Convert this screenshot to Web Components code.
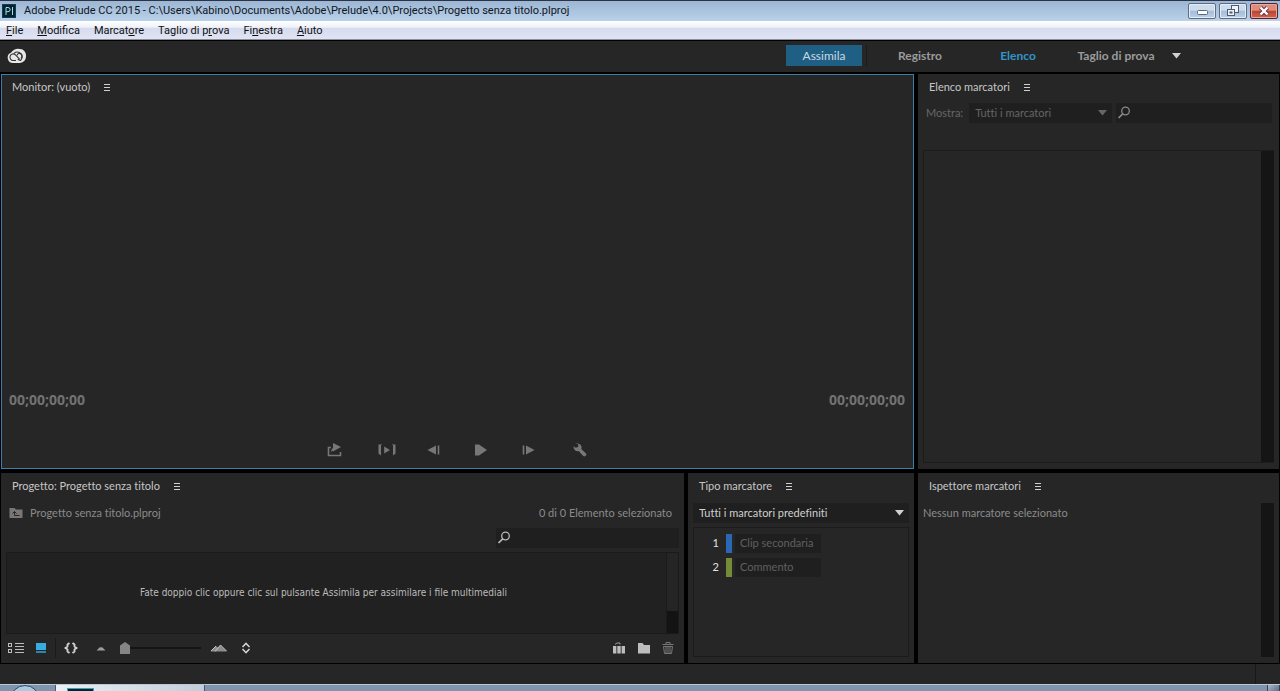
<!DOCTYPE html>
<html lang="it">
<head>
<meta charset="utf-8">
<title>Adobe Prelude CC 2015</title>
<style>
  html { background: #000; }
  body { margin: 0; min-height: 100vh; display: flex; flex-direction: column; font-variant-ligatures: none; }
  prelude-app { flex: 1; }
</style>
</head>
<body>
<prelude-app></prelude-app>
<script>
const ICONS = {
  prelude: [14, 14, '<rect x=".5" y=".5" width="13" height="13" fill="#04222f" stroke="#0d3f52"/><g stroke="#9fe3ea" fill="none"><path d="M4 11V3.500H6a1.800 1.800 0 0 1 0 4.200H4"/><path d="M10.500 3v8"/></g>'],
  minimize: [12, 12, '<rect x="1.500" y="5.500" width="10" height="4" rx="1" fill="#fff" stroke="#5b6880"/>'],
  restore: [12, 12, '<g fill="#eef3f9" stroke="#4d5a70"><rect x="4.500" y=".5" width="7" height="7"/><rect x=".5" y="4.500" width="7" height="6"/><rect x="3" y="7" width="2" height="1"/></g>'],
  close: [12, 12, '<path d="M2.500 2.500l7 7M9.500 2.500l-7 7" stroke="#6c3840" stroke-width="4.400"/><path d="M2.500 2.500l7 7M9.500 2.500l-7 7" stroke="#fff" stroke-width="2.400"/>'],
  cloud: [20, 16, '<path d="M6 15A5.300 5.300 0 0 1 4 4.800 7.500 6.500 0 0 1 13 1a6.300 6.300 0 0 1 6 7 6.500 6.500 0 0 1-6 7z" fill="#e8e8e8"/><g fill="none" stroke="#333" stroke-width="1.100"><path d="M9 12.500H6.300a3.300 3.300 0 1 1 2.200-5.700l4.300 4.500"/><path d="M7 5.300a4.600 4.600 0 1 1 6.500 7.200c-1.200 0-2-.5-2.800-1.300"/><path d="M10 7.300a2.600 2.600 0 1 1 3.800 3"/></g>'],
  menu: [8, 8, '<path d="M1 1.500h6M1 4.500h6M1 7.500h6" stroke="#cfcfcf" stroke-width="1"/>'],
  caret: [10, 6, '<path d="M0 0h9L4.500 5.500z" fill="currentColor"/>'],
  search: [14, 14, '<circle cx="8.500" cy="5" r="3.800" fill="none" stroke="currentColor" stroke-width="1.300"/><path d="M5.700 7.800L1.500 12" stroke="currentColor" stroke-width="1.700"/>'],
  export: [16, 14, '<path d="M4 4.500H1.500v8h12V9" fill="none" stroke="#777" stroke-width="1.600"/><path d="M6 0v8.500l8-4.500z" fill="#777"/><path d="M4 9.500c.3-3 1.200-4.500 3-5v3c-1.500 0-2.300.7-3 2z" fill="#777"/>'],
  inout: [18, 14, '<path d="M.5 1.500H3v11L.5 10.500zM17.500 1.500h-2.500v11l2.500-2z" fill="#777"/><path d="M3 1.500h1M14 1.500h1" stroke="#555"/><path d="M6.200 3.500v7L12 7z" fill="#777"/>'],
  back: [14, 12, '<path d="M9 1.500v9L.5 6z" fill="#777"/><path d="M11.500 1.500v9" stroke="#777" stroke-width="1.600"/>'],
  play: [14, 12, '<path d="M1 .5h4L13 6 5 11.500H1z" fill="#777"/>'],
  forward: [14, 12, '<path d="M5 1.500v9l8.500-4.500z" fill="#777"/><path d="M2.500 1.500v9" stroke="#777" stroke-width="1.600"/>'],
  wrench: [14, 14, '<path d="M2 1l3 0 .3 3L2 4.500.8 3A4 4 0 0 0 5.600 8l4.600 5 1.300.5L13.500 12 13 10.500 8.300 6A4 4 0 0 0 4 .6z" fill="#777"/><path d="M1 1l2.800 3" stroke="#262626" stroke-width="2"/>'],
  folderup: [14, 12, '<path d="M.5 1h5L7 2.500h6.500v8.500H.5z" fill="#777"/><path d="M10.500 8.500H5.500V4.500M3.500 6.500l2-2 2 2" fill="none" stroke="#262626"/>'],
  list: [16, 12, '<g fill="none" stroke="#bdbdbd"><rect x=".5" y="1.500" width="3" height="3"/><rect x=".5" y="7.500" width="3" height="3"/><path d="M7 1.500h9M7 4.500h9M7 7.500h9M7 10.500h9"/></g>'],
  thumbs: [12, 12, '<rect x="1" y="1" width="10" height="7" fill="#37ade0"/><path d="M1 10h10" stroke="#2b86ae" stroke-width="2"/>'],
  braces: [14, 12, '<g fill="none" stroke="#d0d0d0" stroke-width="1.800"><path d="M5.500 1L3.500 2.500v2L1.500 6l2 1.500v2l2 1.500M8.500 1l2 1.500v2l2 1.500-2 1.500v2l-2 1.500"/></g>'],
  hill: [10, 6, '<path d="M.5 5.500L4 2l1 .8L6 2l3.500 3.500z" fill="#9c9c9c"/>'],
  hills: [18, 8, '<path d="M.5 7.500L6 2l2 1.600L10.500 1l6.500 6.500z" fill="#8c8c8c"/><path d="M1 7l5-5M5 7.500L10.500 1l6 6" stroke="#c0c0c0" fill="none"/>'],
  sort: [10, 12, '<path d="M1.500 5L5 1.500 8.500 5M1.500 7L5 10.500 8.500 7" fill="none" stroke="#d0d0d0" stroke-width="1.600"/>'],
  automate: [14, 12, '<path d="M1 4h3.400v7.500H1zM5.300 4h3.400v7.500H5.300zM9.600 4h3.400v7.500H9.600z" fill="#bdbdbd"/><path d="M3 2.500l2-1.500h3v1.500" fill="none" stroke="#999"/>'],
  folder: [14, 12, '<path d="M1 1h4.500L7 3h6v8.500H1z" fill="#bdbdbd"/>'],
  trash: [12, 12, '<g fill="none" stroke="#777"><path d="M4 2V.5h4V2M.5 2.500h11"/><path d="M1.500 4.500h9l-1 7h-7zM4 4.500v7M6 4.500v7M8 4.500v7"/></g>']
};

function define(name, html, setup) {
  const template = document.createElement('template');
  template.innerHTML = html;
  customElements.define(name, class extends HTMLElement {
    constructor() {
      super();
      this.attachShadow({ mode: 'open' }).append(template.content.cloneNode(true));
    }
    connectedCallback() { if (setup) setup(this, this.shadowRoot); }
  });
}

define('ui-icon', '<style>:host{display:inline-flex;flex:none}svg{display:block}</style><span></span>', (el, root) => {
  const [w, h, body] = ICONS[el.getAttribute('name')];
  root.querySelector('span').innerHTML = `<svg width="${w}" height="${h}" viewBox="0 0 ${w} ${h}" aria-hidden="true">${body}</svg>`;
});

define('title-bar', `
<style>
  :host { display: flex; align-items: center; height: 20px; border-top: 1px solid #2b3446; padding: 0 2px;
    background: linear-gradient(#9cb6d3, #b9d1ea); color: #10151d; font: 11px/18px Roboto, sans-serif; }
  h1 { flex: 1; margin: 0 0 0 8px; font: inherit; white-space: nowrap; overflow: hidden; }
  .buttons { display: flex; gap: 3px; }
  button { box-sizing: border-box; width: 28px; height: 16px; padding: 0; border: 1px solid #5d6c84; border-radius: 2px;
    display: flex; align-items: center; justify-content: center; box-shadow: inset 0 0 0 1px #e3edf7;
    background: linear-gradient(#cddced 45%, #a6bdd7 50%, #bcd0e6); }
  .close { border-color: #5b2026; box-shadow: inset 0 0 0 1px #e6a79c; background: linear-gradient(#dd8d7d 45%, #be4230 50%, #cf6350); }
</style>
<ui-icon name="prelude"></ui-icon>
<h1>Adobe Prelude CC 2015 - C:\\Users\\Kabino\\Documents\\Adobe\\Prelude\\4.0\\Projects\\Progetto senza titolo.plproj</h1>
<div class="buttons">
  <button aria-label="Riduci a icona"><ui-icon name="minimize"></ui-icon></button>
  <button aria-label="Ripristina"><ui-icon name="restore"></ui-icon></button>
  <button class="close" aria-label="Chiudi"><ui-icon name="close"></ui-icon></button>
</div>`);

define('menu-bar', `
<style>
  :host { display: block; border-bottom: 1px solid #8c8f98; background: linear-gradient(#fff, #eef1f8 35%, #d5dbee 40%, #e0e4f4); }
  nav { display: flex; gap: 14px; padding: 0 6px; height: 18px; }
  button { border: 0; padding: 0; background: none; color: #111; font: 11px/20px Roboto, sans-serif; }
  u { text-underline-offset: 1px; }
</style>
<nav aria-label="Menu principale">
  <button><u>F</u>ile</button><button><u>M</u>odifica</button><button>Marcat<u>o</u>re</button>
  <button>Taglio di p<u>r</u>ova</button><button>Fi<u>n</u>estra</button><button><u>A</u>iuto</button>
</nav>`);

define('workspace-bar', `
<style>
  :host { box-sizing: border-box; display: flex; align-items: center; justify-content: space-between; height: 32px; padding: 0 91px 2px 7px;
    border-top: 1px solid #000; background: #262626; }
  button { border: 0; background: none; padding: 0; color: #9b9b9b; font: bold 12px/20px Lato, sans-serif; }
  nav { display: flex; align-items: center; }
  .cloud { display: flex; }
  .tab { width: 98px; }
  .active { width: 76px; height: 21px; background: #1f5f83; color: #c9dae4; font-weight: normal; }
  .rule { width: 1px; height: 21px; margin: 0 4px; background: #1b1b1b; }
  .current { color: #3295c8; }
  .more { width: 24px; height: 20px; color: #d0d0d0; display: flex; align-items: center; justify-content: center; }
</style>
<button class="cloud" aria-label="Creative Cloud"><ui-icon name="cloud"></ui-icon></button>
<nav aria-label="Aree di lavoro">
  <button class="active">Assimila</button><span class="rule"></span>
  <button class="tab">Registro</button><button class="tab current">Elenco</button><button class="tab">Taglio di prova</button>
  <button class="more" aria-label="Altre aree di lavoro"><ui-icon name="caret"></ui-icon></button>
</nav>`);

define('ui-panel', `
<style>
  :host { box-sizing: border-box; display: flex; flex-direction: column; min-width: 0; min-height: 0;
    border: 1px solid #262626; background: #262626; color: #8b8b8b; font: 11px/20px Lato, sans-serif; font-variant-ligatures: none; }
  :host([focused]) { border-color: #3c7ea8; }
  header { box-sizing: border-box; display: flex; align-items: center; gap: 13px; height: 25px; padding: 0 10px 1px; }
  h2 { margin: 0; color: #c6c6c6; font: inherit; font-variant-ligatures: none; }
  button { display: flex; border: 0; padding: 0; background: none; }
</style>
<header><h2></h2><button aria-label="Menu del pannello"><ui-icon name="menu"></ui-icon></button></header>
<slot></slot>`, (el, root) => {
  root.querySelector('h2').textContent = el.getAttribute('heading');
});

define('search-box', `
<style>
  :host { display: flex; align-items: center; height: 20px; min-width: 0; background: #1f1f1f; }
  ui-icon { padding: 0 1px; }
  input { flex: 1; min-width: 0; height: 20px; box-sizing: border-box; border: 0; padding: 0 4px; background: none; color: #ccc; font: 11px Lato, sans-serif; outline: 0; }
</style>
<ui-icon name="search"></ui-icon><input type="text" aria-label="Cerca">`);

define('select-box', `
<style>
  :host { display: grid; align-items: center; background: #1f1f1f; }
  select { grid-area: 1 / 1; appearance: none; border: 0; background: none; padding: 0 6px; width: 100%; height: 20px;
    color: inherit; opacity: 1; font: 11px/20px Lato, sans-serif; font-variant-ligatures: none; }
  ui-icon { grid-area: 1 / 1; justify-self: end; padding-right: 4px; pointer-events: none; }
</style>
<select><option></option></select><ui-icon name="caret"></ui-icon>`, (el, root) => {
  root.querySelector('option').textContent = el.getAttribute('value');
  const select = root.querySelector('select');
  select.setAttribute('aria-label', el.getAttribute('label'));
  select.disabled = el.hasAttribute('disabled');
});

define('monitor-view', `
<style>
  :host { flex: 1; display: flex; flex-direction: column; }
  .screen { flex: 1; }
  .times { display: flex; justify-content: space-between; padding: 0 8px 0 7px; color: #727272; font: bold 14px/20px "Noto Sans", sans-serif; }
  .transport { display: flex; justify-content: center; align-items: center; padding: 30px 0 8px; gap: 17px; height: 20px; }
  button { width: 30px; height: 20px; border: 0; padding: 0; background: none; display: flex; align-items: center; justify-content: center; }
  .apart { margin-left: 5px; }
</style>
<div class="screen"></div>
<div class="times"><span>00;00;00;00</span><span>00;00;00;00</span></div>
<div class="transport">
  <button aria-label="Esporta"><ui-icon name="export"></ui-icon></button>
  <button class="apart" aria-label="Riproduci da attacco a stacco"><ui-icon name="inout"></ui-icon></button>
  <button aria-label="Fotogramma precedente"><ui-icon name="back"></ui-icon></button>
  <button aria-label="Riproduci"><ui-icon name="play"></ui-icon></button>
  <button aria-label="Fotogramma successivo"><ui-icon name="forward"></ui-icon></button>
  <button class="apart" aria-label="Impostazioni"><ui-icon name="wrench"></ui-icon></button>
</div>`);

define('project-view', `
<style>
  :host { flex: 1; display: flex; flex-direction: column; padding: 0 4px; }
  .path { display: flex; align-items: center; gap: 7px; height: 20px; margin: 4px 7px 5px 3px; }
  .path span:last-child { margin-left: auto; }
  search-box { width: 183px; align-self: flex-end; color: #b8b8b8; }
  .bin { flex: 1; display: flex; margin-top: 4px; border: 1px solid #1a1a1a; background: #212121; }
  .bin p { flex: 1; margin: auto; padding-right: 26px; text-align: center; color: #bcbcbc; font: 10px/14px "DejaVu Sans Condensed", "DejaVu Sans", sans-serif; }
  .scroll { width: 11px; background: #131313; border-left: 1px solid #1a1a1a; }
  .thumb { height: 73%; background: #252525; }
  .tools { display: flex; align-items: center; height: 28px; padding: 0 5px 0 2px; }
  button { display: flex; border: 0; padding: 0; background: none; }
  .grid { margin-left: 11px; }
  .rule { width: 1px; height: 20px; margin: 0 8px; background: #1a1a1a; }
  .small { margin: 0 14px 0 18px; }
  input { appearance: none; width: 81px; height: 14px; margin: 0 9px 0 0; background: linear-gradient(#141414, #141414) center / 100% 2px no-repeat; }
  input::-webkit-slider-thumb { appearance: none; width: 10px; height: 12px; background: #858585; clip-path: polygon(50% 0, 100% 30%, 100% 100%, 0 100%, 0 30%); }
  .sort { margin-left: 13px; }
  .right { display: flex; gap: 11px; margin-left: auto; }
</style>
<div class="path"><ui-icon name="folderup"></ui-icon><span>Progetto senza titolo.plproj</span><span>0 di 0 Elemento selezionato</span></div>
<search-box></search-box>
<div class="bin"><p>Fate doppio clic oppure clic sul pulsante Assimila per assimilare i file multimediali</p><div class="scroll"><div class="thumb"></div></div></div>
<div class="tools">
  <button aria-label="Vista elenco"><ui-icon name="list"></ui-icon></button>
  <button class="grid" aria-label="Vista miniature"><ui-icon name="thumbs"></ui-icon></button>
  <span class="rule"></span>
  <button aria-label="Scorrimento"><ui-icon name="braces"></ui-icon></button>
  <ui-icon class="small" name="hill"></ui-icon>
  <input type="range" min="0" max="100" value="0" aria-label="Dimensione miniature">
  <ui-icon name="hills"></ui-icon>
  <button class="sort" aria-label="Ordina"><ui-icon name="sort"></ui-icon></button>
  <div class="right">
    <button aria-label="Crea montaggio"><ui-icon name="automate"></ui-icon></button>
    <button aria-label="Nuovo contenitore"><ui-icon name="folder"></ui-icon></button>
    <button aria-label="Elimina"><ui-icon name="trash"></ui-icon></button>
  </div>
</div>`);

define('marker-types', `
<style>
  :host { flex: 1; display: flex; flex-direction: column; padding: 4px 4px 5px; }
  select-box { color: #d0d0d0; }
  ol { flex: 1; margin: 4px 0 0; padding: 5px 0 0 8px; list-style: none; border: 1px solid #1b1b1b; }
  li { display: grid; grid-template-columns: 24px 6px 89px; align-items: center; height: 19px; margin-bottom: 5px; }
  li > span { text-align: right; padding-right: 7px; color: #e4e4e4; }
  i { height: 19px; background: var(--mark); }
  button { height: 19px; margin-left: 3px; padding: 0 5px; border: 0; background: #1f1f1f; color: #606060; text-align: left; font: 11px/18px Lato, sans-serif; white-space: nowrap; }
</style>
<select-box label="Tipo marcatore" value="Tutti i marcatori predefiniti"></select-box>
<ol>
  <li style="--mark:#2a67b4"><span>1</span><i></i><button>Clip secondaria</button></li>
  <li style="--mark:#748c35"><span>2</span><i></i><button>Commento</button></li>
</ol>`);

define('marker-list', `
<style>
  :host { flex: 1; display: flex; flex-direction: column; padding: 3px 4px 5px; }
  .filter { display: flex; align-items: center; color: #666; padding: 0 2px 0 3px; }
  .filter select-box { flex: none; width: 143px; margin: 0 4px 0 6px; }
  search-box { flex: 1; color: #8b8b8b; }
  .list { flex: 1; display: flex; justify-content: flex-end; margin-top: 27px; border: 1px solid #1c1c1c; border-right: 0; }
  .scroll { width: 13px; background: #151515; }
</style>
<div class="filter"><span>Mostra:</span><select-box disabled label="Mostra" value="Tutti i marcatori"></select-box><search-box></search-box></div>
<div class="list"><div class="scroll"></div></div>`);

define('marker-inspector', `
<style>
  :host { flex: 1; display: flex; justify-content: space-between; padding: 4px 4px 5px; }
  p { margin: 0; }
  .scroll { width: 13px; background: #151515; }
</style>
<p>Nessun marcatore selezionato</p><div class="scroll"></div>`);

define('task-bar', `
<style>
  :host { display: flex; justify-content: space-between; height: 6px; overflow: hidden; border-top: 1px solid #b9c9da; background: #8194ad; }
  button { border: 0; padding: 0; }
  .start { width: 30px; height: 30px; margin-left: 10px; border: 1px solid #2f4a66; border-radius: 50%; background: #a8cbe0; box-sizing: border-box; }
  .app { width: 150px; height: 30px; margin: 0 auto 0 15px; padding: 4px 0 0 12px; border: solid #4c5868; border-width: 0 1px; background: linear-gradient(90deg, #eceff3, #c3ccd8); }
  .app span { display: block; width: 25px; height: 26px; background: #062430; box-shadow: 0 0 0 1px #3aa6bd; }
  .desktop { width: 13px; border: solid #36404e; border-width: 0 1px; background: linear-gradient(135deg, #a9b7c8, #5d6f87); }
</style>
<button class="start" aria-label="Start"></button>
<button class="app" aria-label="Adobe Prelude"><span></span></button>
<button class="desktop" aria-label="Mostra desktop"></button>`);

define('prelude-app', `
<style>
  :host { display: flex; flex-direction: column; }
  main { flex: 1; display: grid; grid-template-columns: 683fr 226fr 361fr; grid-template-rows: 395fr 190fr; gap: 4px;
    padding: 2px 1px 1px; background: #000; }
  .monitor { grid-column: 1 / 3; }
  footer { display: flex; justify-content: flex-end; height: 20px; background: #262626; }
  footer span { width: 24px; border-left: 1px solid #191919; }
</style>
<title-bar></title-bar>
<menu-bar></menu-bar>
<workspace-bar></workspace-bar>
<main>
  <ui-panel class="monitor" focused heading="Monitor: (vuoto)"><monitor-view></monitor-view></ui-panel>
  <ui-panel heading="Elenco marcatori"><marker-list></marker-list></ui-panel>
  <ui-panel heading="Progetto: Progetto senza titolo"><project-view></project-view></ui-panel>
  <ui-panel heading="Tipo marcatore"><marker-types></marker-types></ui-panel>
  <ui-panel heading="Ispettore marcatori"><marker-inspector></marker-inspector></ui-panel>
</main>
<footer><span></span></footer>
<task-bar></task-bar>`);
</script>
</body>
</html>
